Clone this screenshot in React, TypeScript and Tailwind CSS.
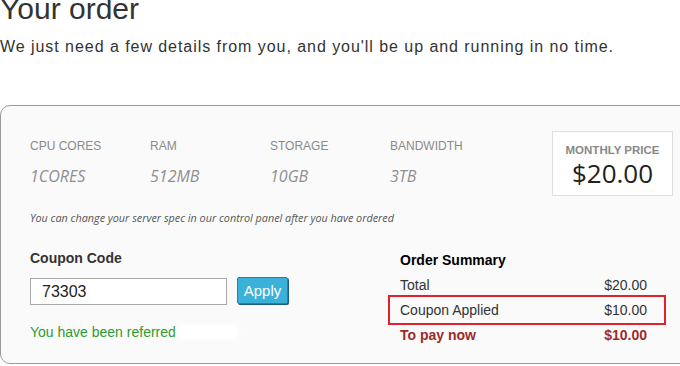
const specs = [
  { label: "CPU CORES", value: "1CORES" },
  { label: "RAM", value: "512MB" },
  { label: "STORAGE", value: "10GB" },
  { label: "BANDWIDTH", value: "3TB" },
];

const arial = "font-['Liberation_Sans',Arial,sans-serif]";
const open = "font-['Open_Sans',sans-serif]";

export default function App() {
  return (
    <div className={`w-[680px] h-[366px] overflow-hidden bg-white text-[#333] ${arial}`}>
      <h1 className="mt-[-6px] text-[30px] leading-[30px] text-[#333]">Your order</h1>
      <p className="mt-[13px] text-[16px] leading-[20px] tracking-[0.95px] text-[#333]">
        We just need a few details from you, and you'll be up and running in no time.
      </p>

      <div className="mt-[48px] h-[259px] w-[720px] rounded-[10px] border border-[#9a9a9a] bg-[#fafafa] pl-[29px] pt-[25px]">
        <div className="flex items-start">
          <div className="mt-[7px] grid grid-cols-[120px_120px_120px_120px]">
            {specs.map((s) => (
              <div key={s.label}>
                <div className="text-[12px] leading-[16px] text-[#8a8a8a]">{s.label}</div>
                <div className={`mt-[11px] text-[16px] leading-[22px] italic text-[#8f8f8f] ${open}`}>
                  {s.value}
                </div>
              </div>
            ))}
          </div>
          <div className="ml-[42px] flex h-[65px] w-[121px] flex-col items-center border border-[#dedede] bg-white">
            <div className="mt-[11px] text-[11.5px] font-bold leading-[14px] text-[#888]">MONTHLY PRICE</div>
            <div className={`mt-[1px] text-[26px] leading-[30px] text-[#222] ${open}`}>$20.00</div>
          </div>
        </div>

        <p className={`mt-[14px] text-[10.8px] leading-[15px] italic text-[#555] ${open}`}>
          You can change your server spec in our control panel after you have ordered
        </p>

        <div className="mt-[23px] flex">
          <div className="w-[370px]">
            <div className="text-[14px] font-bold leading-[20px] text-[#333]">Coupon Code</div>
            <div className="mt-[10px] flex items-start">
              <input
                readOnly
                value="73303"
                className="h-[27px] w-[197px] border border-[#a9a9a9] bg-white pl-[11px] text-[16px] text-[#222] outline-none"
              />
              <button className="ml-[10px] mt-[-1px] h-[27px] w-[51px] rounded-[2px] border border-[#2a7fa9] bg-[#39b1d8] text-[15px] leading-[25px] text-white shadow-[1px_1px_0_#1d5f80]">
                Apply
              </button>
            </div>
            <div className="mt-[17px] flex items-center text-[14px] leading-[20px] text-[#2e9a2e]">
              You have been referred
              <span className="ml-[1px] h-[16px] w-[62px] rounded-full bg-white blur-[2px]" />
            </div>
          </div>

          <div className="w-[247px] text-[14px] leading-[25px]">
            <div className="font-bold text-black">Order Summary</div>
            <div className="flex justify-between">
              <span>Total</span>
              <span>$20.00</span>
            </div>
            <div className="relative flex justify-between">
              <span>Coupon Applied</span>
              <span>$10.00</span>
              <span className="absolute left-[-12px] right-[-19px] top-[-3px] bottom-[-2px] border-2 border-[#e3212b]" />
            </div>
            <div className="flex justify-between font-bold text-[#9c2b2b]">
              <span>To pay now</span>
              <span>$10.00</span>
            </div>
          </div>
        </div>
      </div>
    </div>
  );
}
